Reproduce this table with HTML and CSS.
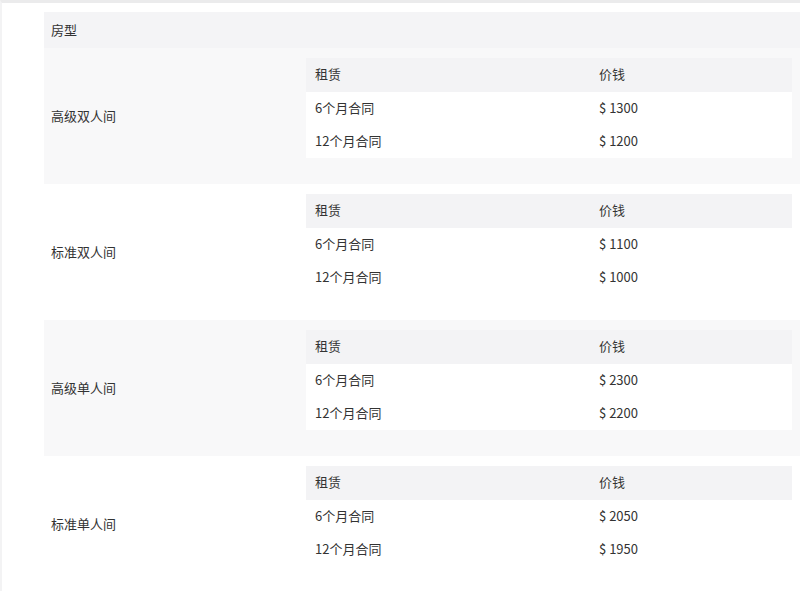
FILE: index.html
```html
<!DOCTYPE html>
<html lang="zh-CN">
<head>
<meta charset="utf-8">
<link rel="stylesheet" href="styles.css">
</head>
<body>
<div class="page">
  <table class="rooms">
    <colgroup><col class="col-name"><col class="col-detail"></colgroup>
    <thead>
      <tr><th class="type-head" colspan="2">房型</th></tr>
    </thead>
    <tbody>
      <tr class="room shaded">
        <td class="room-name">高级双人间</td>
        <td class="room-detail">
          <table class="prices">
            <colgroup><col class="col-lease"><col class="col-price"></colgroup>
            <thead><tr><th>租赁</th><th>价钱</th></tr></thead>
            <tbody>
              <tr><td>6个月合同</td><td>$ 1300</td></tr>
              <tr><td>12个月合同</td><td>$ 1200</td></tr>
            </tbody>
          </table>
        </td>
      </tr>
      <tr class="room">
        <td class="room-name">标准双人间</td>
        <td class="room-detail">
          <table class="prices">
            <colgroup><col class="col-lease"><col class="col-price"></colgroup>
            <thead><tr><th>租赁</th><th>价钱</th></tr></thead>
            <tbody>
              <tr><td>6个月合同</td><td>$ 1100</td></tr>
              <tr><td>12个月合同</td><td>$ 1000</td></tr>
            </tbody>
          </table>
        </td>
      </tr>
      <tr class="room shaded">
        <td class="room-name">高级单人间</td>
        <td class="room-detail">
          <table class="prices">
            <colgroup><col class="col-lease"><col class="col-price"></colgroup>
            <thead><tr><th>租赁</th><th>价钱</th></tr></thead>
            <tbody>
              <tr><td>6个月合同</td><td>$ 2300</td></tr>
              <tr><td>12个月合同</td><td>$ 2200</td></tr>
            </tbody>
          </table>
        </td>
      </tr>
      <tr class="room">
        <td class="room-name">标准单人间</td>
        <td class="room-detail">
          <table class="prices">
            <colgroup><col class="col-lease"><col class="col-price"></colgroup>
            <thead><tr><th>租赁</th><th>价钱</th></tr></thead>
            <tbody>
              <tr><td>6个月合同</td><td>$ 2050</td></tr>
              <tr><td>12个月合同</td><td>$ 1950</td></tr>
            </tbody>
          </table>
        </td>
      </tr>
    </tbody>
  </table>
</div>
</body>
</html>
```
FILE: styles.css
```css
html, body {
  margin: 0;
  padding: 0;
  background: #ffffff;
}
body {
  font-family: "Noto Sans CJK SC", "Noto Sans", sans-serif;
  font-size: 13px;
  color: #333333;
}
.page {
  height: 591px;
  border-top: 3px solid #ebebec;
  border-left: 2px solid #f3f3f4;
  padding: 9px 0 0 42px;
  box-sizing: border-box;
  overflow: hidden;
}
table {
  border-collapse: collapse;
  border-spacing: 0;
}
th, td {
  box-sizing: border-box;
}
.rooms {
  width: 756px;
  table-layout: fixed;
}
.col-name {
  width: 262px;
}
.col-detail {
  width: 494px;
}
.type-head {
  height: 36px;
  padding: 0 0 2px 7px;
  text-align: left;
  font-weight: normal;
  background: #f4f4f6;
}
.room {
  height: 136px;
}
.room.shaded {
  background: #f8f8f9;
}
.room-name {
  padding: 0 0 2px 7px;
  vertical-align: middle;
  white-space: nowrap;
}
.room-detail {
  padding: 10px 8px 26px 0;
  vertical-align: top;
}
.prices {
  width: 486px;
  table-layout: fixed;
  background: #ffffff;
}
.col-lease {
  width: 284px;
}
.col-price {
  width: 202px;
}
.prices th {
  height: 34px;
  padding: 0 0 3px 9px;
  text-align: left;
  font-weight: normal;
  background: #f3f3f5;
}
.prices td {
  height: 33px;
  padding: 0 0 2px 9px;
}
```
